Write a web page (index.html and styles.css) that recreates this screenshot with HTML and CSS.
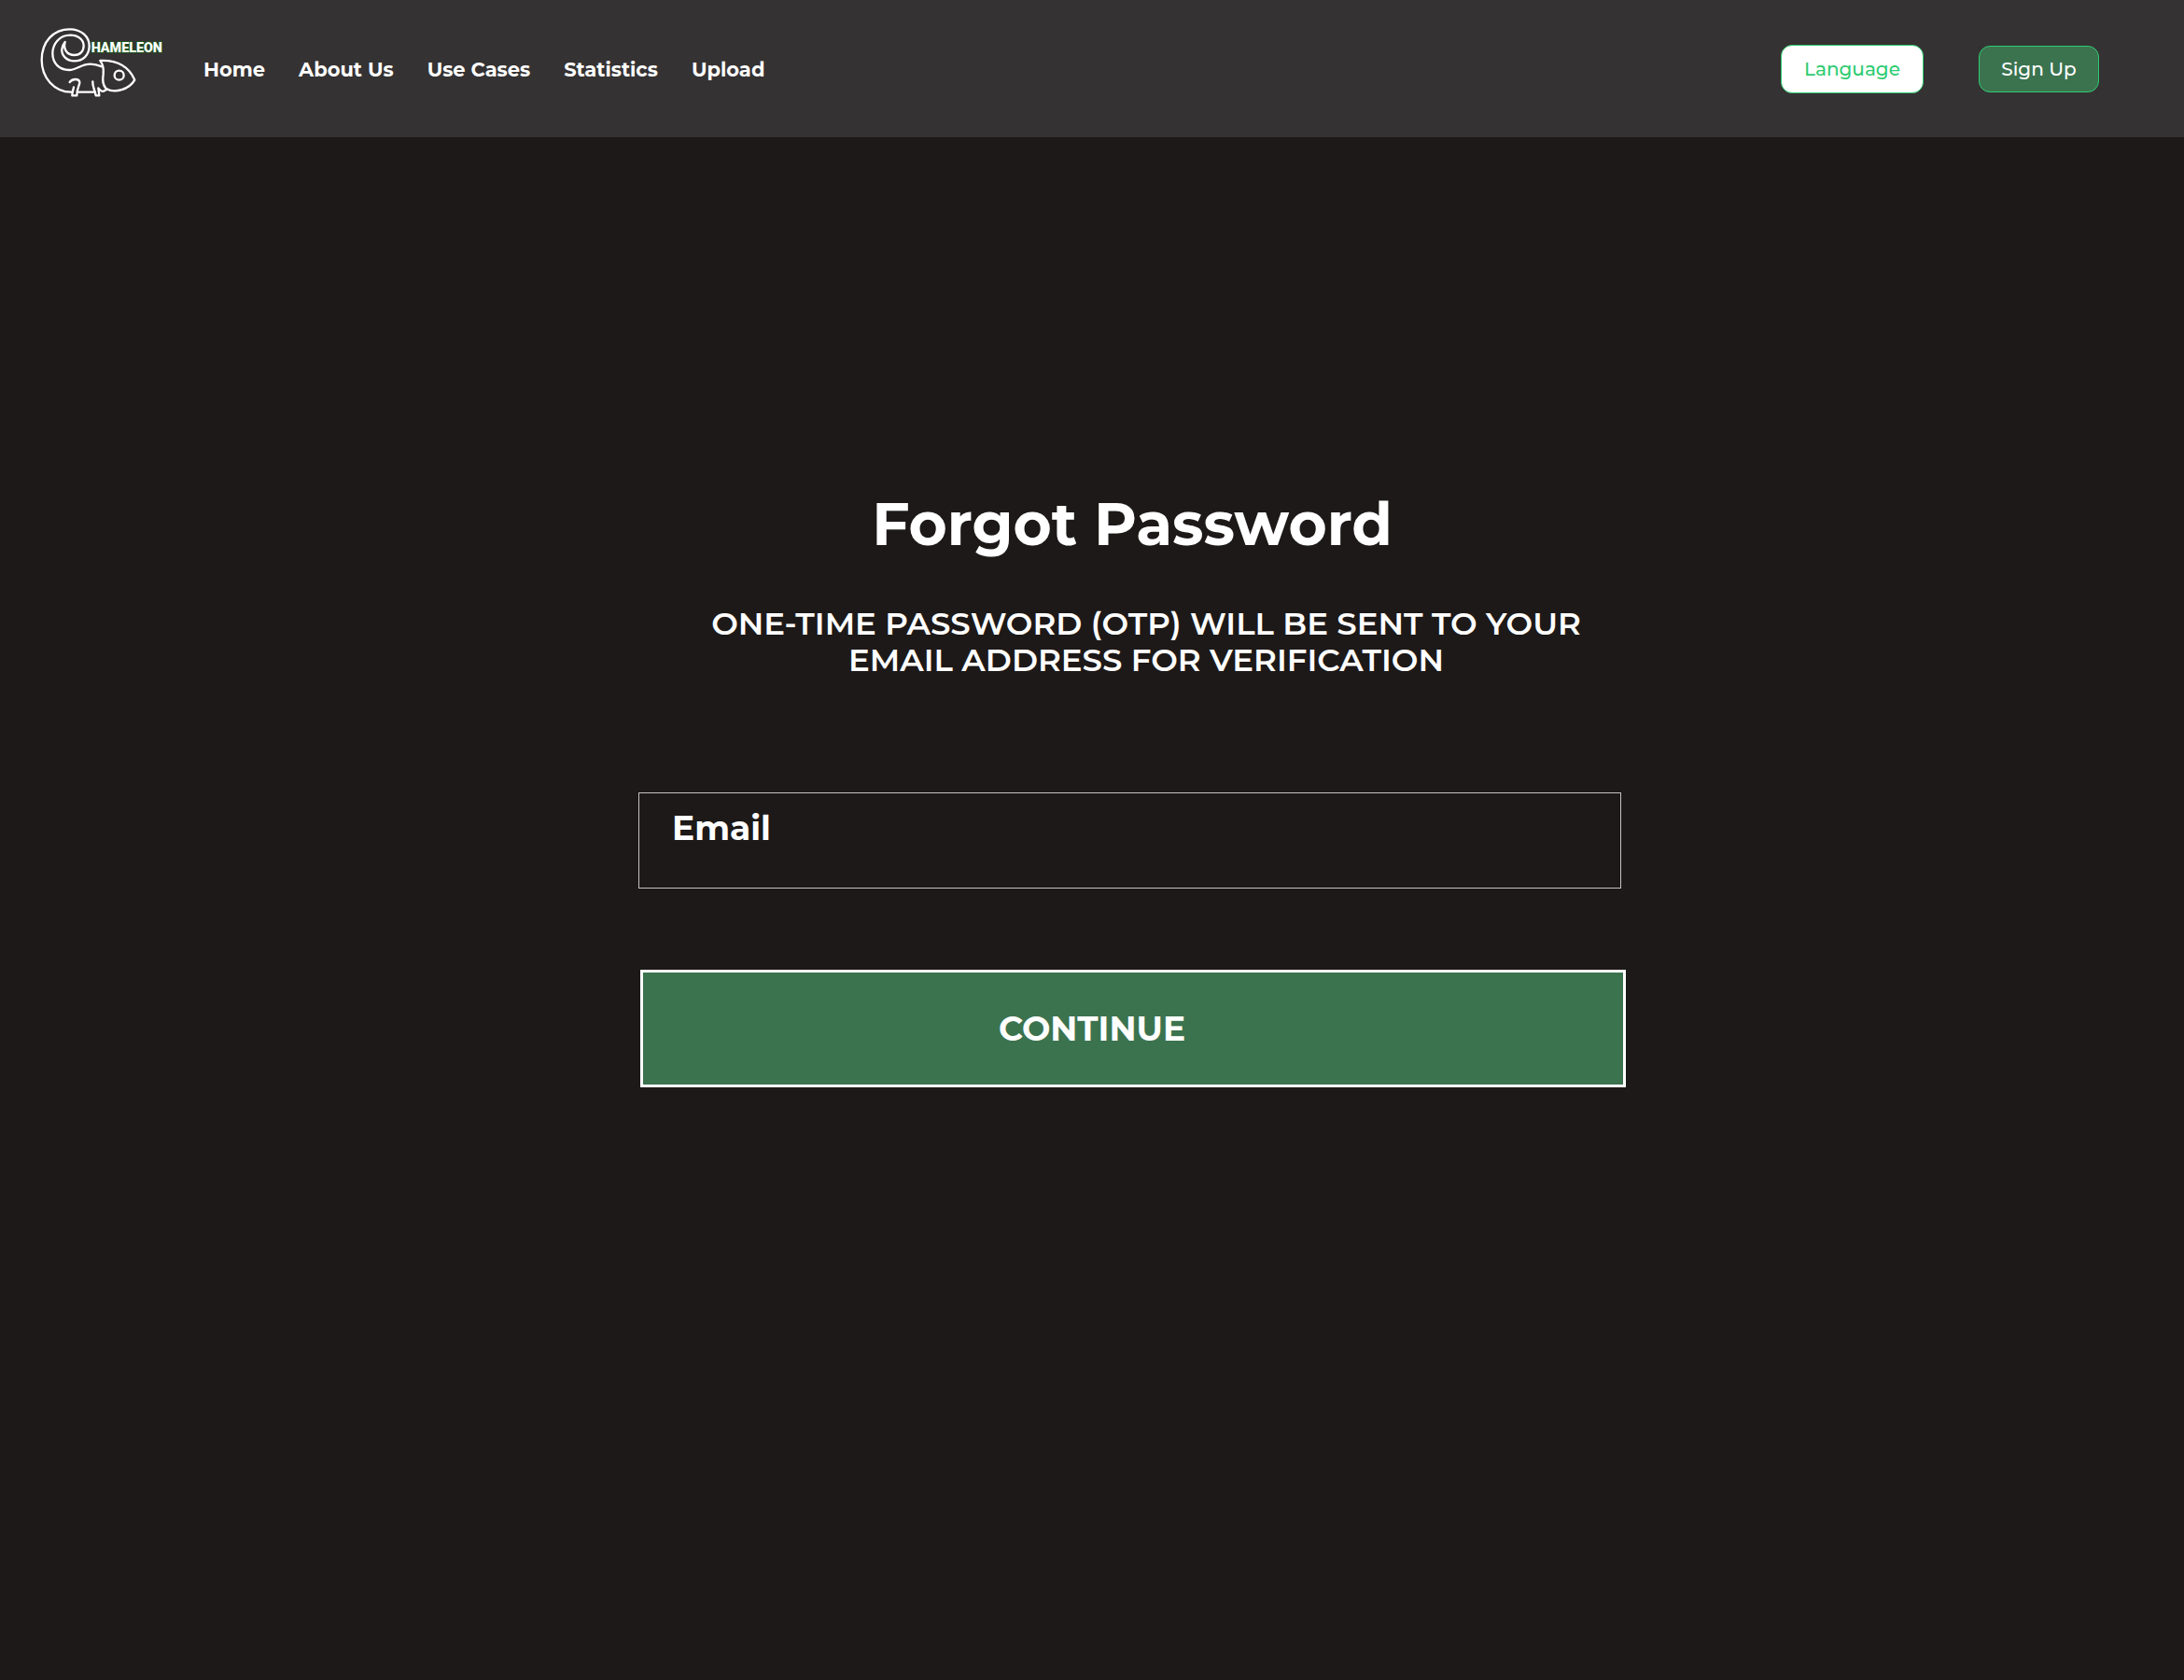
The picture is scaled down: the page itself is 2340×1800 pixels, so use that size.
FILE: index.html
```html
<!DOCTYPE html>
<html lang="en">
<head>
  <meta charset="utf-8">
  <meta name="viewport" content="width=device-width, initial-scale=1">
  <title>Forgot Password</title>
  <link rel="stylesheet" href="styles.css">
</head>
<body>
  <header class="header">
    <a class="logo" href="#" aria-label="Chameleon">
      <svg class="logo-art" viewBox="0 0 480 351" aria-hidden="true">
        <g class="logo-lines">
          <path d="M141 251C83 252 44 203 44 148C44 88 82 49 134 49C173 49 197 74 197 103C197 133 176 151 149 151C123 151 107 132 109 113C110 103 114 96 119 90C113 112 124 132 149 132C168 132 179 119 179 102C179 82 161 68 136 68C102 68 79 95 79 127C79 159 101 180 132 180C158 180 170 161 201 161C215 161 225 164 238 169"/>
          <path d="M232 150C284 148 324 169 343 212C325 243 280 256 251 240C241 229 239 211 242 194C244 176 242 163 232 150Z"/>
          <circle cx="293" cy="197" r="15"/>
          <path d="M134 219C143 207 164 207 166 219C167 229 156 239 157 262H142C142 250 146 242 147 235"/>
          <path d="M162 251H212M208 217C207 236 214 239 218 262H229L226 238C233 244 232 251 243 248L254 242"/>
        </g>
        <text class="logo-text" x="203" y="123">HAMELEON</text>
      </svg>
    </a>
    <nav class="nav" aria-label="Main">
      <a href="#">Home</a>
      <a href="#">About Us</a>
      <a href="#">Use Cases</a>
      <a href="#">Statistics</a>
      <a href="#">Upload</a>
    </nav>
    <div class="actions">
      <button class="pill pill-light" type="button">Language</button>
      <button class="pill pill-green" type="button">Sign Up</button>
    </div>
  </header>
  <main class="main">
    <form class="form">
      <h1 class="title">Forgot Password</h1>
      <p class="hint">ONE-TIME PASSWORD (OTP) WILL BE SENT TO YOUR EMAIL ADDRESS FOR VERIFICATION</p>
      <input class="email" type="email" placeholder="Email" aria-label="Email">
      <button class="continue" type="submit">CONTINUE</button>
    </form>
  </main>
</body>
</html>
```

FILE: styles.css
```css
* {
  box-sizing: border-box;
}

body {
  margin: 0;
  min-height: 100vh;
  background: #1d1918;
  color: #fff;
  font-family: Montserrat, Inter, sans-serif;
}

button,
input {
  font-family: inherit;
}

.header {
  display: flex;
  align-items: center;
  padding: 15px 91px 15px 30px;
  background: #353233;
}

.logo-art {
  display: block;
  width: 160px;
  height: 117px;
}

.logo-lines {
  fill: none;
  stroke: #fff;
  stroke-width: 7;
  stroke-linecap: round;
  stroke-linejoin: round;
}

.logo-text {
  fill: #fff;
  stroke: #1c5a1c;
  stroke-width: 5;
  paint-order: stroke;
  font: 900 43px Roboto, "Liberation Sans", sans-serif;
}

.nav {
  display: flex;
  gap: 36px;
  padding: 2px 0 0 28px;
}

.nav a {
  color: #fff;
  font-size: 21px;
  font-weight: 700;
  line-height: 28px;
  text-decoration: none;
  white-space: nowrap;
}

.actions {
  display: flex;
  align-items: center;
  gap: 59px;
  margin-left: auto;
}

.pill {
  border: 1px solid #2ecc71;
  border-radius: 12px;
  font-size: 20px;
  font-weight: 500;
  line-height: 24px;
}

.pill-light {
  width: 153px;
  padding: 13px 0;
  background: #fff;
  color: #2ecc71;
}

.pill-green {
  width: 129px;
  padding: 12px 0;
  background: #3b734f;
  color: #fff;
}

.main {
  display: flex;
  justify-content: center;
  padding: 376px 0 80px 86px;
}

.form {
  display: flex;
  flex-direction: column;
  width: 100%;
  max-width: 1058px;
}

.title {
  margin: 0;
  font-size: 63px;
  font-weight: 700;
  line-height: 78px;
  text-align: center;
}

.hint {
  max-width: 960px;
  margin: 48px 0 0 64px;
  font-size: 34px;
  font-weight: 600;
  line-height: 39px;
  text-align: center;
}

.email {
  width: calc(100% - 5px);
  height: 103px;
  margin: 122px 0 0;
  padding: 0 35px 28px;
  border: 1px solid #c4c3c3;
  background: transparent;
  color: #fff;
  font-size: 36px;
  font-weight: 700;
}

.email::placeholder {
  color: #fff;
  opacity: 1;
}

.continue {
  height: 126px;
  margin: 87px 0 0 2px;
  padding: 0 88px 0 0;
  border: 3px solid #fff;
  background: #3b734f;
  color: #fff;
  font-size: 36px;
  font-weight: 700;
}
```
